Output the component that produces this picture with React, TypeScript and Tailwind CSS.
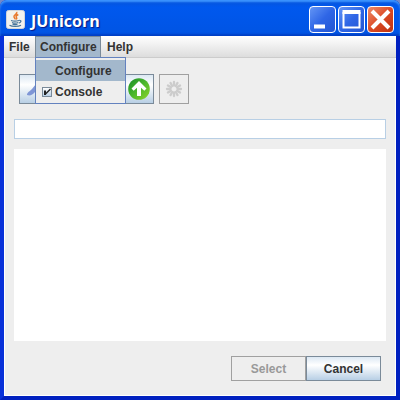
import React from "react";
import type { ReactNode } from "react";

function CaptionButton({ label, tone, children }: { label: string; tone: string; children: ReactNode }) {
  return (
    <button
      type="button"
      aria-label={label}
      className={`h-[27px] w-[27px] overflow-hidden rounded-[4px] border border-white ${tone}`}
    >
      <svg viewBox="0 0 25 25" className="block h-full w-full" fill="none" stroke="#fff">
        {children}
      </svg>
    </button>
  );
}

function ToolButton({ label, disabled, children }: { label: string; disabled?: boolean; children?: ReactNode }) {
  return (
    <button
      type="button"
      aria-label={label}
      disabled={disabled}
      className={`flex h-[30px] w-[30px] items-center justify-center border ${
        disabled ? "border-[#a0a0a0] bg-[#eeeeee]" : "border-[#7a8a99] bg-linear-to-b from-[#dce8f3] via-white via-35% to-[#b8cfe5]"
      }`}
    >
      {children}
    </button>
  );
}

function JavaIcon() {
  return (
    <svg viewBox="0 0 19 19" className="h-[19px] w-[19px]" fill="none" aria-hidden="true">
      <rect x="0.5" y="0.5" width="18" height="18" rx="2" fill="#f2f2ee" stroke="#d2d5da" />
      <path d="M10.500 2c1.500 2-3.500 3-2.500 5 .4 1 1.500 1.500 1 2.500M12.300 4.500c-2 1-2.800 1.900-1.800 3 .5.700.3 1.300-.3 1.900" stroke="#e8792c" strokeWidth="1.500" />
      <path d="M5 10.500c2 .8 5.500.8 8 0M6 12.500c2 .7 4.500.7 6.200 0M6.500 14.200c1.800.5 3.500.5 5 0M13.200 10.500c2.800-.3 2 2-.4 2.600M3.500 15.300c2.500 1.500 9 1.500 11.500 0" stroke="#47759a" strokeWidth="1.200" />
    </svg>
  );
}

function UpIcon() {
  return (
    <svg viewBox="0 0 22 22" className="h-[22px] w-[22px] shrink-0" aria-hidden="true">
      <defs>
        <linearGradient id="leaf" x1="0" y1="0" x2="1" y2="1">
          <stop offset="0" stopColor="#168c28" />
          <stop offset="0.500" stopColor="#4db82c" />
          <stop offset="1" stopColor="#8fd52c" />
        </linearGradient>
      </defs>
      <circle cx="11" cy="11" r="10.800" fill="url(#leaf)" />
      <path d="M11 3l7.500 7.500-2.200 2.200-3.300-3V18H9V9.700l-3.300 3-2.200-2.200z" fill="#fff" />
    </svg>
  );
}

const petals = [0, 30, 60, 90, 120, 150, 180, 210, 240, 270, 300, 330];

function SpinnerIcon() {
  return (
    <svg viewBox="0 0 18 18" className="h-[18px] w-[18px] shrink-0" stroke="#cccccc" strokeWidth="2.300" strokeLinecap="round" aria-hidden="true">
      {petals.map((angle) => (
        <path key={angle} d="M9 5.500V2" transform={`rotate(${angle} 9 9)`} />
      ))}
    </svg>
  );
}

function MenuBar() {
  return (
    <nav className="flex h-[22px] items-stretch border-b border-[#cccccc] bg-linear-to-b from-white to-[#dddddd]">
      <button type="button" className="w-[31px] pl-[5px] text-left">File</button>
      <div className="relative flex">
        <button type="button" aria-expanded="true" className="w-[66px] border-x border-t border-[#7a8a99] bg-[#a3b8cc] pl-1 text-left">
          Configure
        </button>
        <div className="absolute top-full left-0 z-10 w-[91px] border border-[#6382bf] bg-[#eeeeee] pt-[2px]">
          <button type="button" className="block h-[21px] w-full bg-[#a3b8cc] pl-[19px] text-left">Configure</button>
          <label className="flex h-[22px] items-center pl-[6px]">
            <span className="relative mr-[3px] flex h-[10px] w-[10px] shrink-0">
              <input type="checkbox" defaultChecked className="peer h-[10px] w-[10px] appearance-none border border-[#7a8a99] bg-linear-to-b from-white to-[#b8cfe5]" />
              <svg viewBox="0 0 10 10" className="pointer-events-none absolute inset-0 hidden h-[10px] w-[10px] peer-checked:block" fill="none" stroke="#222" aria-hidden="true">
                <path d="M3 3.500v4.500" strokeWidth="2" />
                <path d="M3 7.500L8.500 2" strokeWidth="1.500" />
              </svg>
            </span>
            Console
          </label>
        </div>
      </div>
      <button type="button" className="pl-[6px] text-left">Help</button>
    </nav>
  );
}

export default function App() {
  return (
    <div className="bg-[#7288c8]">
      <main className="flex min-h-screen flex-col rounded-t-[7px] border-x-4 border-b-4 border-t-0 border-[#0831d9] bg-[#eeeeee] font-['Liberation_Sans',Arial,sans-serif] text-[12px] leading-4 font-bold text-[#333333] shadow-[inset_0_0_0_1px_#fff] [border-bottom-color:#0020c0] [border-right-color:#0020c0]">
        <header className="-mx-1 flex h-9 items-center rounded-t-[7px] bg-linear-to-b from-[#0753d8] via-[#0058ee] via-20% to-[#0054e3] pt-[3px] pr-[6px] pl-[6px] shadow-[inset_0_2px_2px_#3d95ff,inset_0_-2px_2px_#003fc4]">
          <JavaIcon />
          <h1 className="ml-[6px] flex-1 pt-[2px] font-['Open_Sans','Noto_Sans',sans-serif] text-[16px] leading-5 text-white [text-shadow:1px_1px_1px_#0a1883]">
            JUnicorn
          </h1>
          <div className="flex gap-[2px]">
            <CaptionButton label="Minimize" tone="bg-linear-to-br from-[#6495f5] via-[#2f66e6] to-[#2355d2]">
              <path d="M4 19.500h11" strokeWidth="4" />
            </CaptionButton>
            <CaptionButton label="Maximize" tone="bg-linear-to-br from-[#6495f5] via-[#2f66e6] to-[#2355d2]">
              <path d="M4.500 5v15.500h16V5" strokeWidth="2" />
              <path d="M3.500 5h18" strokeWidth="4" />
            </CaptionButton>
            <CaptionButton label="Close" tone="bg-linear-to-br from-[#ee8a68] via-[#dc4a24] to-[#bd3210]">
              <path d="M4 4l17 17M21 4L4 21" strokeWidth="4" />
            </CaptionButton>
          </div>
        </header>
        <MenuBar />
        <div className="flex flex-1 flex-col px-[10px] pt-4 pb-[15px]">
          <div className="flex gap-[5px] pl-[5px]">
            <ToolButton label="Configure tools">
              <svg viewBox="0 0 20 20" className="h-5 w-5 shrink-0" fill="#7f96d6" aria-hidden="true">
                <path d="M3 16c0-3 3-3.500 5-6l4-5 4 3-5 5c-2.500 3-5 4-8 3z" />
              </svg>
            </ToolButton>
            <ToolButton label="Open" />
            <ToolButton label="Save" />
            <ToolButton label="Upload"><UpIcon /></ToolButton>
            <ToolButton label="Loading" disabled><SpinnerIcon /></ToolButton>
          </div>
          <input type="text" aria-label="Address" className="mt-[15px] h-5 w-full border border-[#b8cfe5] bg-white px-1 font-normal outline-none" />
          <textarea aria-label="Results" className="mt-[10px] min-h-[100px] w-full flex-1 resize-none bg-white p-1 font-normal outline-none" />
          <div className="mt-[15px] flex justify-end pr-[5px]">
            <button type="button" disabled className="h-[25px] w-[75px] border border-[#a0a0a0] bg-[#eeeeee] text-[#999999]">Select</button>
            <button type="button" className="h-[25px] w-[75px] border border-[#7a8a99] bg-linear-to-b from-[#dce8f3] via-white via-35% to-[#b8cfe5]">Cancel</button>
          </div>
        </div>
      </main>
    </div>
  );
}
